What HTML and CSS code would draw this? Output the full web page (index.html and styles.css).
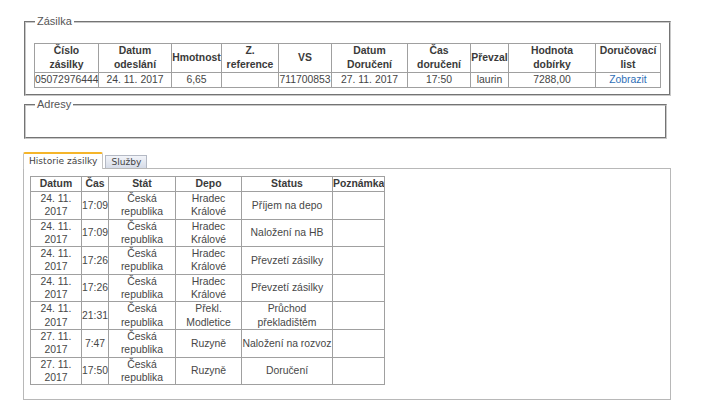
FILE: index.html
```html
<!DOCTYPE html>
<html lang="cs">
<head>
<meta charset="utf-8">
<title>Zásilka</title>
<link rel="stylesheet" href="styles.css">
</head>
<body>
<div class="page">
  <fieldset class="box box-zasilka">
    <legend>Zásilka</legend>
    <table class="grid grid-zasilka">
      <colgroup>
        <col class="c64"><col class="c73"><col class="c50"><col class="c57"><col class="c53"><col class="c76"><col class="c63"><col class="c38"><col class="c87"><col class="c65">
      </colgroup>
      <tr class="head">
        <th>Číslo<br>zásilky</th>
        <th>Datum<br>odeslání</th>
        <th>Hmotnost</th>
        <th>Z.<br>reference</th>
        <th>VS</th>
        <th>Datum<br>Doručení</th>
        <th>Čas<br>doručení</th>
        <th>Převzal</th>
        <th>Hodnota<br>dobírky</th>
        <th>Doručovací<br>list</th>
      </tr>
      <tr class="row">
        <td>05072976444</td>
        <td>24. 11. 2017</td>
        <td>6,65</td>
        <td></td>
        <td>711700853</td>
        <td>27. 11. 2017</td>
        <td>17:50</td>
        <td>laurin</td>
        <td>7288,00</td>
        <td><a class="link" href="#">Zobrazit</a></td>
      </tr>
    </table>
  </fieldset>

  <fieldset class="box box-adresy">
    <legend>Adresy</legend>
    <div class="empty"></div>
  </fieldset>

  <div class="tabs">
    <div class="tablist">
      <span class="tab active">Historie zásilky</span>
      <span class="tab">Služby</span>
    </div>
    <div class="panel">
      <table class="grid grid-hist">
        <colgroup>
          <col class="h51"><col class="h27"><col class="h67"><col class="h66"><col class="h91"><col class="h52">
        </colgroup>
        <tr class="head">
          <th>Datum</th><th>Čas</th><th>Stát</th><th>Depo</th><th>Status</th><th>Poznámka</th>
        </tr>
        <tr><td>24. 11.<br>2017</td><td>17:09</td><td>Česká<br>republika</td><td>Hradec<br>Králové</td><td>Příjem na depo</td><td></td></tr>
        <tr><td>24. 11.<br>2017</td><td>17:09</td><td>Česká<br>republika</td><td>Hradec<br>Králové</td><td>Naložení na HB</td><td></td></tr>
        <tr><td>24. 11.<br>2017</td><td>17:26</td><td>Česká<br>republika</td><td>Hradec<br>Králové</td><td>Převzetí zásilky</td><td></td></tr>
        <tr><td>24. 11.<br>2017</td><td>17:26</td><td>Česká<br>republika</td><td>Hradec<br>Králové</td><td>Převzetí zásilky</td><td></td></tr>
        <tr><td>24. 11.<br>2017</td><td>21:31</td><td>Česká<br>republika</td><td>Překl.<br>Modletice</td><td>Průchod<br>překladištěm</td><td></td></tr>
        <tr><td>27. 11.<br>2017</td><td>7:47</td><td>Česká<br>republika</td><td>Ruzyně</td><td>Naložení na rozvoz</td><td></td></tr>
        <tr><td>27. 11.<br>2017</td><td>17:50</td><td>Česká<br>republika</td><td>Ruzyně</td><td>Doručení</td><td></td></tr>
      </table>
    </div>
  </div>
</div>
</body>
</html>
```

FILE: styles.css
```css
html, body {
  margin: 0;
  padding: 0;
  background: #fff;
}
body {
  font-family: "Liberation Sans", Arial, sans-serif;
  font-size: 10.4px;
  color: #444;
}
.page {
  padding: 15px 0 0 24px;
  width: 647px;
}
.box {
  margin: 0;
  width: 643px;
  box-sizing: border-box;
  border: 2px groove #c8c8c8;
  padding: 15px 8px 6px 8px;
}
.box legend {
  padding: 0 2px;
  margin-left: 1px;
  line-height: 13px;
  font-size: 11px;
  color: #555;
}
.box-adresy {
  margin-top: 2px;
  padding: 0 8px;
}
.empty {
  height: 26px;
}
.grid {
  border-collapse: collapse;
  table-layout: fixed;
}
.grid th, .grid td {
  border: 1px solid #a0a0a0;
  text-align: center;
  vertical-align: middle;
  padding: 0;
  white-space: nowrap;
  overflow: hidden;
}
.grid th {
  font-weight: bold;
  color: #3a3a3a;
}
.grid-zasilka {
  width: 626px;
  line-height: 14px;
}
.grid-zasilka .head th {
  height: 28px;
}
.grid-zasilka .row td {
  height: 14px;
}
.c64 { width: 64px; }
.c73 { width: 73px; }
.c50 { width: 50px; }
.c57 { width: 57px; }
.c53 { width: 53px; }
.c76 { width: 76px; }
.c63 { width: 63px; }
.c38 { width: 38px; }
.c87 { width: 87px; }
.c65 { width: 65px; }
.link {
  color: #2f6fb7;
  text-decoration: none;
}
.tabs {
  margin-top: 14px;
  margin-left: -1px;
  width: 648px;
}
.tablist {
  display: flex;
  align-items: flex-end;
  gap: 2px;
  height: 16px;
  position: relative;
  z-index: 1;
  margin-bottom: -1px;
}
.tab {
  font-family: "DejaVu Sans", Verdana, sans-serif;
  font-size: 9.1px;
  color: #444;
  box-sizing: border-box;
  border: 1px solid #b4b9c4;
  border-bottom: none;
  padding: 0 5px;
}
.tab.active {
  height: 17px;
  line-height: 15px;
  background: #fff;
  border-color: #c4c4c4;
  border-top: 2px solid #f5b52a;
  border-radius: 2px 2px 0 0;
}
.tab:not(.active) {
  height: 13px;
  line-height: 12px;
  background: linear-gradient(#f2f4f9, #d6dce8);
  margin-bottom: 1px;
}
.panel {
  border: 1px solid #b8b8b8;
  padding: 7px 6px 14px 6px;
  background: #fff;
}
.grid-hist {
  width: 354px;
  line-height: 13.3px;
}
.grid-hist .head th {
  height: 14px;
  line-height: 14px;
}
.grid-hist td {
  color: #474747;
}
.h51 { width: 51px; }
.h27 { width: 27px; }
.h67 { width: 67px; }
.h66 { width: 66px; }
.h91 { width: 91px; }
.h52 { width: 52px; }
```
